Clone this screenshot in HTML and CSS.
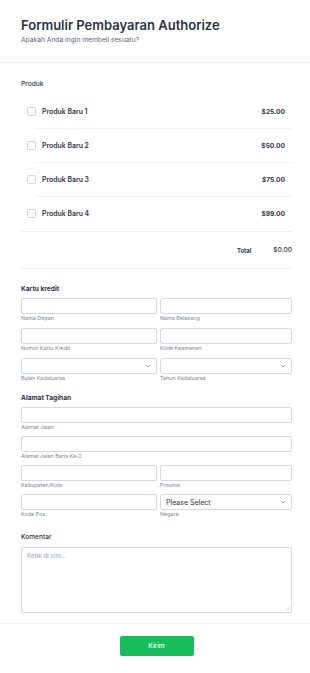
FILE: index.html
```html
<!DOCTYPE html>
<html lang="id">
<head>
<meta charset="utf-8">
<title>Formulir Pembayaran Authorize</title>
<link rel="stylesheet" href="styles.css">
</head>
<body>
<div class="form">
  <header class="head">
    <h1 class="title">Formulir Pembayaran Authorize</h1>
    <p class="subtitle">Apakah Anda ingin membeli sesuatu?</p>
  </header>

  <section class="section products">
    <div class="label">Produk</div>
    <ul class="items">
      <li class="item"><span class="check"></span><span class="pname">Produk Baru 1</span><span class="price">$25.00</span></li>
      <li class="item"><span class="check"></span><span class="pname">Produk Baru 2</span><span class="price">$50.00</span></li>
      <li class="item"><span class="check"></span><span class="pname">Produk Baru 3</span><span class="price">$75.00</span></li>
      <li class="item last"><span class="check"></span><span class="pname">Produk Baru 4</span><span class="price">$99.00</span></li>
    </ul>
    <div class="total"><span class="total-label">Total</span><span class="total-value">$0.00</span></div>
  </section>

  <section class="section card">
    <div class="label bold">Kartu kredit</div>
    <div class="grid">
      <div class="field"><input class="input" type="text"><span class="sub">Nama Depan</span></div>
      <div class="field"><input class="input" type="text"><span class="sub">Nama Belakang</span></div>
      <div class="field"><input class="input" type="text"><span class="sub">Nomor Kartu Kredit</span></div>
      <div class="field"><input class="input" type="text"><span class="sub">Kode Keamanan</span></div>
      <div class="field"><div class="select-wrap"><select class="input select"><option></option></select><svg class="chev" viewBox="0 0 6 4" width="6" height="4"><path d="M1 1l2 2 2-2" fill="none" stroke="#8a93a8" stroke-width="0.9"/></svg></div><span class="sub">Bulan Kadaluarsa</span></div>
      <div class="field"><div class="select-wrap"><select class="input select"><option></option></select><svg class="chev" viewBox="0 0 6 4" width="6" height="4"><path d="M1 1l2 2 2-2" fill="none" stroke="#8a93a8" stroke-width="0.9"/></svg></div><span class="sub">Tahun Kadaluarsa</span></div>
    </div>
  </section>

  <section class="section address">
    <div class="label bold">Alamat Tagihan</div>
    <div class="grid tight">
      <div class="field wide"><input class="input" type="text"><span class="sub">Alamat Jalan</span></div>
      <div class="field wide"><input class="input" type="text"><span class="sub">Alamat Jalan Baris Ke-2</span></div>
      <div class="field"><input class="input" type="text"><span class="sub">Kabupaten/Kota</span></div>
      <div class="field"><input class="input" type="text"><span class="sub">Provinsi</span></div>
      <div class="field"><input class="input" type="text"><span class="sub">Kode Pos</span></div>
      <div class="field"><div class="select-wrap"><select class="input select"><option>Please Select</option></select><svg class="chev" viewBox="0 0 6 4" width="6" height="4"><path d="M1 1l2 2 2-2" fill="none" stroke="#8a93a8" stroke-width="0.9"/></svg></div><span class="sub">Negara</span></div>
    </div>
  </section>

  <section class="section comment">
    <div class="label">Komentar</div>
    <div class="textarea-wrap">
      <textarea class="textarea" placeholder="Ketik di sini..."></textarea>
      <svg class="grip" viewBox="0 0 5 5" width="5" height="5"><path d="M4.5 1L1 4.5M4.5 3L3 4.5" stroke="#b4bac7" stroke-width="0.6" fill="none"/></svg>
    </div>
  </section>

  <footer class="submit">
    <button class="button" type="button">Kirim</button>
  </footer>
</div>
</body>
</html>
```
FILE: styles.css
```css
* { box-sizing: border-box; }
html, body { margin: 0; padding: 0; background: #ffffff; }
body { font-family: Inter, "Noto Sans", "Liberation Sans", sans-serif; color: #2c3345; }

.form { width: 310px; }

.head {
  padding: 15px 18px 17px 21px;
  border-bottom: 1px solid #eceef2;
}
.title {
  margin: 0;
  font-size: 13px;
  line-height: 20px;
  font-weight: 600;
  color: #2c3345;
}
.subtitle {
  margin: 0;
  font-size: 6.7px;
  line-height: 10px;
  color: #57647e;
}

.section { padding: 0 18px 0 21px; }

.label {
  font-size: 6.6px;
  line-height: 10px;
  font-weight: 500;
  color: #2c3345;
}
.label.bold { font-weight: 700; }

.products { padding-top: 16px; }
.items { list-style: none; margin: 6px 0 0; padding: 0; border-bottom: 1px solid #eceef2; }
.item {
  display: flex;
  align-items: center;
  height: 34px;
  padding: 0 7px 1px 6px;
  background: linear-gradient(#f0f1f4, #f0f1f4) no-repeat 14px 100% / calc(100% - 14px) 1px;
}
.item.last { background: none; }
.check {
  width: 9px;
  height: 9px;
  border: 1px solid #cfd4de;
  border-radius: 1.5px;
  flex: none;
}
.pname {
  margin-left: 6px;
  font-size: 6.9px;
  font-weight: 600;
  color: #2c3345;
  flex: 1;
}
.price {
  font-size: 6.6px;
  font-weight: 700;
  color: #2c3345;
}
.total {
  display: flex;
  justify-content: flex-end;
  align-items: center;
  height: 37px;
  border-bottom: 1px solid #eceef2;
  gap: 22px;
}
.total-label { font-size: 5.9px; font-weight: 700; color: #2c3345; }
.total-value { font-size: 6.6px; font-weight: 500; color: #2c3345; }

.card { padding-top: 15px; }
.grid {
  display: grid;
  grid-template-columns: 136px 1fr;
  column-gap: 3px;
  row-gap: 6px;
  margin-top: 4px;
}
.grid.tight { row-gap: 5px; }
.field { display: flex; flex-direction: column; min-width: 0; }
.field.wide { grid-column: 1 / -1; }
.input {
  display: block;
  width: 100%;
  height: 16px;
  margin: 0;
  padding: 0 5px;
  border: 1px solid #d5d9e2;
  border-radius: 2px;
  background: #ffffff;
  font-family: inherit;
  font-size: 7px;
  color: #2c3345;
  outline: none;
}
.select-wrap { position: relative; }
.select { appearance: none; -webkit-appearance: none; }
.chev { position: absolute; right: 6px; top: 6px; }
.sub {
  font-size: 5.4px;
  line-height: 8px;
  color: #7f879a;
}

.address { padding-top: 11px; }

.comment { padding-top: 14px; padding-bottom: 10px; border-bottom: 1px solid #f0f1f4; }
.textarea-wrap { position: relative; margin-top: 5px; }
.textarea {
  display: block;
  width: 100%;
  height: 66px;
  padding: 4px 5px;
  border: 1px solid #d5d9e2;
  border-radius: 2px;
  font-family: inherit;
  font-size: 6.3px;
  color: #2c3345;
  resize: none;
  outline: none;
}
.textarea::placeholder { color: #98a2b8; }
.grip { position: absolute; right: 2px; bottom: 2px; }

.submit { display: flex; justify-content: center; padding: 12px 18px 16px 21px; }
.button {
  width: 74px;
  height: 20px;
  border: none;
  border-radius: 2px;
  background: #18bd5b;
  color: #ffffff;
  font-family: inherit;
  font-size: 6.6px;
  font-weight: 500;
  cursor: pointer;
}
```
